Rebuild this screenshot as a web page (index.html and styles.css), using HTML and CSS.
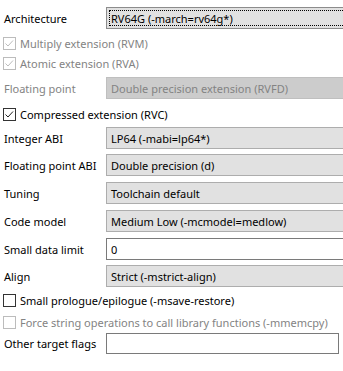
FILE: index.html
```html
<!DOCTYPE html>
<html lang="en">
<head>
    <meta charset="UTF-8">
    <title>Target options</title>
    <link rel="stylesheet" href="styles.css">
</head>
<body>
    <div class="panel">
        <div class="row field r-arch">
            <span class="lbl">Architecture</span>
            <div class="combo focused">RV64G (-march=rv64g*)</div>
        </div>
        <div class="row check-row r-mul disabled">
            <span class="box"><svg width="13" height="13" viewBox="0 0 13 13"><polyline points="2.5,6.5 5,9 10,3.5" /></svg></span>
            <span>Multiply extension (RVM)</span>
        </div>
        <div class="row check-row r-atom disabled">
            <span class="box"><svg width="13" height="13" viewBox="0 0 13 13"><polyline points="2.5,6.5 5,9 10,3.5" /></svg></span>
            <span>Atomic extension (RVA)</span>
        </div>
        <div class="row field r-fp disabled">
            <span class="lbl">Floating point</span>
            <div class="combo">Double precision extension (RVFD)</div>
        </div>
        <div class="row check-row r-comp">
            <span class="box"><svg width="13" height="13" viewBox="0 0 13 13"><polyline points="2.5,6.5 5,9 10,3.5" /></svg></span>
            <span>Compressed extension (RVC)</span>
        </div>
        <div class="row field r-iabi">
            <span class="lbl">Integer ABI</span>
            <div class="combo">LP64 (-mabi=lp64*)</div>
        </div>
        <div class="row field r-fabi">
            <span class="lbl">Floating point ABI</span>
            <div class="combo">Double precision (d)</div>
        </div>
        <div class="row field r-tune">
            <span class="lbl">Tuning</span>
            <div class="combo">Toolchain default</div>
        </div>
        <div class="row field r-model">
            <span class="lbl">Code model</span>
            <div class="combo">Medium Low (-mcmodel=medlow)</div>
        </div>
        <div class="row field r-sdata">
            <span class="lbl">Small data limit</span>
            <div class="text-input">0</div>
        </div>
        <div class="row field r-align">
            <span class="lbl">Align</span>
            <div class="combo">Strict (-mstrict-align)</div>
        </div>
        <div class="row check-row r-prolog">
            <span class="box"></span>
            <span>Small prologue/epilogue (-msave-restore)</span>
        </div>
        <div class="row check-row r-force disabled">
            <span class="box"></span>
            <span>Force string operations to call library functions (-mmemcpy)</span>
        </div>
        <div class="row field r-other">
            <span class="lbl">Other target flags</span>
            <div class="text-input short"></div>
        </div>
    </div>
</body>
</html>
```

FILE: styles.css
```css
body {
    margin: 0;
    background-color: #fff;
    font-family: "Segoe UI", "Noto Sans", sans-serif;
    font-size: 11px;
    color: #000;
    overflow: hidden;
}
.panel {
    display: flex;
    flex-direction: column;
    width: 360px;
}
.row {
    display: flex;
    align-items: center;
    white-space: nowrap;
}
.field {
    height: 22px;
}
.check-row {
    height: 20px;
    padding-left: 3px;
}
.lbl {
    width: 102px;
    padding-left: 4px;
}
.combo,
.text-input {
    position: relative;
    flex: 1;
    height: 100%;
    box-sizing: border-box;
    display: flex;
    align-items: center;
    padding-left: 4px;
    background-color: #e1e1e1;
    border: 1px solid #adadad;
}
.combo.focused {
    border-color: #8c8c8c;
}
.combo.focused::after {
    content: "";
    position: absolute;
    top: 2px;
    left: 2px;
    right: 2px;
    bottom: 2px;
    border: 1px dotted #000;
}
.text-input {
    background-color: #fff;
    border-color: #7a7a7a;
}
.text-input.short {
    flex: none;
    width: 233px;
}
.box {
    width: 13px;
    height: 13px;
    box-sizing: border-box;
    border: 1px solid #333;
    background-color: #fff;
    margin-right: 4px;
    display: flex;
}
.box svg {
    margin: -1px;
}
.box polyline {
    fill: none;
    stroke: #222;
    stroke-width: 1;
}
.disabled {
    color: #838383;
}
.disabled .box {
    border-color: #bcbcbc;
}
.disabled .box polyline {
    stroke: #bcbcbc;
}
.disabled .combo {
    background-color: #cccccc;
    border-color: #bfbfbf;
    color: #838383;
}

/* vertical spacing of the rows */
.r-arch { margin-top: 7px; }
.r-mul { margin-top: 4px; }
.r-fp { margin-top: 4px; }
.r-comp { margin-top: 5px; }
.r-iabi { margin-top: 3px; }
.r-fabi { margin-top: 5px; }
.r-tune { margin-top: 6px; }
.r-model { margin-top: 6px; }
.r-sdata { margin-top: 6px; }
.r-align { margin-top: 5px; }
.r-prolog { margin-top: 3px; }
.r-force { margin-top: 2px; }
.r-other { margin-top: 1px; height: 21px; }
```
